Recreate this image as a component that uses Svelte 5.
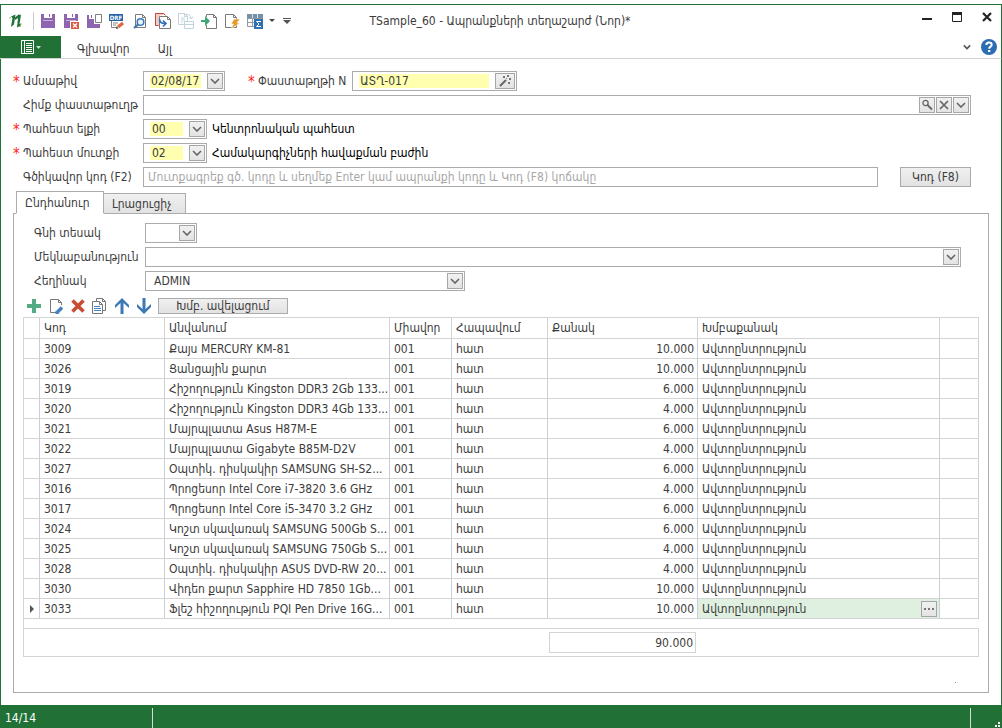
<script>
  const auto = 'Ավտոընտրություն';
  const rows = [
    ['3009', 'Քայս MERCURY KM-81', '10.000'],
    ['3026', 'Ցանցային քարտ', '10.000'],
    ['3019', 'Հիշողություն Kingston DDR3 2Gb 133...', '6.000'],
    ['3020', 'Հիշողություն Kingston DDR3 4Gb 133...', '4.000'],
    ['3021', 'Մայրպլատա Asus H87M-E', '6.000'],
    ['3022', 'Մայրպլատա Gigabyte B85M-D2V', '4.000'],
    ['3027', 'Օպտիկ. դիսկակիր SAMSUNG SH-S2...', '6.000'],
    ['3016', 'Պրոցեսոր Intel Core i7-3820 3.6 GHz', '4.000'],
    ['3017', 'Պրոցեսոր Intel Core i5-3470 3.2 GHz', '6.000'],
    ['3024', 'Կոշտ սկավառակ SAMSUNG 500Gb S...', '6.000'],
    ['3025', 'Կոշտ սկավառակ SAMSUNG 750Gb S...', '4.000'],
    ['3028', 'Օպտիկ. դիսկակիր ASUS DVD-RW 20...', '4.000'],
    ['3030', 'Վիդեո քարտ Sapphire HD 7850 1Gb...', '10.000'],
    ['3033', 'Ֆլեշ հիշողություն PQI Pen Drive 16G...', '10.000']
  ];
  let current = $state(13);
  let tab = $state(0);
</script>

{#snippet chevron()}
  <svg class="chev" viewBox="0 0 10 6" width="10" height="6" aria-hidden="true"><path d="M1 1l4 4 4-4" fill="none" stroke="#666" stroke-width="1.6" /></svg>
{/snippet}

{#snippet page(x, y, w, h)}
  <path d="M{x + 0.5} {y + 0.5}h{w - 4}l3 3v{h - 4}h-{w - 1}z" fill="#fff" stroke="#7a7a7a" />
  <path d="M{x + w - 3.5} {y + 0.5}v3h3" fill="none" stroke="#7a7a7a" />
{/snippet}

{#snippet disk()}
  <path fill="#9065b0" d="M1 1h14v14H1z" />
  <path fill="#fff" d="M4 1h8v4H4z" />
  <path fill="#9065b0" d="M9 1h1v3H9z" />
  <path fill="#c9b2d8" d="M3 7h10v1H3z" />
{/snippet}

<div class="window">
  <header class="titlebar">
    <div class="quick">
      <svg class="logo" viewBox="0 0 16 16" width="16" height="16" aria-hidden="true">
        <path d="M3 3.500l4.500-2L6 11.500 3 14l1.500-9z" fill="#21713a" />
        <path d="M7 4.500L10.500 1.500l2.500.500-1.500 9 2-.500-1 2.500-3.500 1.500L10 5 7 7z" fill="#21713a" />
        <path d="M3 4.500l-1.500.500M13 10.500l-1 3.500" stroke="#8fb53a" />
      </svg>
      <span class="sep"></span>
      <button class="icon" aria-label="Պահպանել"><svg viewBox="0 0 16 16">{@render disk()}</svg></button>
      <button class="icon" aria-label="Պահպանել և փակել"><svg viewBox="0 0 16 16">{@render disk()}<path fill="#fff" d="M7 8h9v8H7z" /><path fill="#dc5a41" d="M8 9h8v7H8z" /><path d="M10 10.500l4 4M14 10.500l-4 4" stroke="#fff" stroke-width="1.300" /></svg></button>
      <button class="icon" aria-label="Պահպանել և նոր"><svg viewBox="0 0 16 16"><path fill="#9065b0" d="M1 2h13v13H1z" /><path fill="#fff" d="M3 2h5v4H3zM8 0h8v11H8z" /><path fill="#9065b0" d="M5 2h1v3H5z" /><path fill="#fff" stroke="#808080" d="M9.500 1.500h6v8h-6z" /></svg></button>
      <button class="icon" aria-label="DRF">
        <svg viewBox="0 0 16 16"><path d="M2.500 8v6.500H8M12.500 3v5" fill="none" stroke="#858585" /><path fill="#2665a5" d="M0 1h14v7H0z" /><text x="7" y="7" text-anchor="middle" font-size="6" font-weight="700" fill="#fff">DRF</text><path d="M4 10h5M4 12h3" stroke="#858585" /><path d="M9 14l5-4" stroke="#e1683f" stroke-width="3.500" /><path d="M7 16l.500-3 2 2.500z" fill="#555" /></svg>
      </button>
      <button class="icon" aria-label="Դիտել"><svg viewBox="0 0 16 16">{@render page(3, 1, 11, 14)}<circle cx="8.500" cy="9" r="3.300" fill="#e8f1f8" stroke="#3b78b5" stroke-width="1.500" /><path d="M6 11.500l-4 3.500" stroke="#3b78b5" stroke-width="2.200" /></svg></button>
      <button class="icon" aria-label="Պատճենել"><svg viewBox="0 0 16 16"><path d="M0 0h9l2 2H5v11H0z" fill="#f3cbc6" /><path d="M.5 12.500V.500h8l2 2M.5 12.500h3" fill="none" stroke="#c4473a" />{@render page(4, 3, 12, 13)}<path d="M4.500 6q0 4.500 5.500 4.500M8 7.500l3 3-3 3" fill="none" stroke="#2e6fb5" stroke-width="1.600" /></svg></button>
      <button class="icon" aria-label="Տեղափոխել" disabled><svg viewBox="0 0 16 16" opacity=".35"><path d="M.5.500h6l3 3v8h-9z" fill="#fff" stroke="#4d87a8" /><path d="M6.500.500v3h3M3 5h4M3 7h4M3 9h2M8 1.500q5-.500 5 4M11 4l2 2 2-2" fill="none" stroke="#4d87a8" /><path d="M6.500 8.500h9v7h-9zM6.500 11.500h9" fill="#fff" stroke="#4d87a8" /></svg></button>
      <button class="icon" aria-label="Ներմուծել"><svg viewBox="0 0 16 16">{@render page(5, 1, 11, 15)}<path d="M0 6h3V2l7 6-7 6v-4H0z" fill="#fff" /><path d="M0 7h4V3l5 5-5 5V9H0z" fill="#3fa577" /></svg></button>
      <button class="icon" aria-label="Կատարել"><svg viewBox="0 0 16 16">{@render page(1, 1, 12, 14)}<path d="M10 6h6l-3 4h3l-9 6 2.500-5H7z" fill="#e69b27" stroke="#fff" stroke-width=".6" /></svg></button>
      <button class="icon" aria-label="Գումար"><svg viewBox="0 0 16 16"><path d="M.5 1.500h15v12H.5zM.5 5.500h15M.5 9.500h15M5.500 1v13M10.500 1v13" fill="#fff" stroke="#8f989f" /><path d="M0 1h16v4H0z" fill="#7392a8" /><path d="M5 1h1v4H5zM10 1h1v4h-1z" fill="#dbe3e8" /><path d="M7 6h9v10H7z" fill="#2d70b3" /><path d="M14 8.500H9.500l2.500 2.500-2.500 2.500H14" fill="none" stroke="#fff" /></svg></button>
      <svg class="drop" viewBox="0 0 6 4" width="6" height="4" aria-hidden="true"><path d="M0 0h6L3 3z" fill="#444" /></svg>
      <svg class="drop more" viewBox="0 0 8 6" width="8" height="6" aria-hidden="true"><path d="M0 0h8v1H0zM0 2h8L4 6z" fill="#555" /></svg>
    </div>
    <h1>TSample_60 - Ապրանքների տեղաշարժ (Նոր)*</h1>
    <div class="winbtns">
      <button aria-label="Ծալել"><svg viewBox="0 0 10 10"><path d="M0 6h10v2H0z" fill="#222" /></svg></button>
      <button aria-label="Ծավալել"><svg viewBox="0 0 10 10"><path d="M.5 1h9v8.500h-9z" fill="none" stroke="#222" /><path d="M0 0h10v3H0z" fill="#222" /></svg></button>
      <button aria-label="Փակել"><svg viewBox="0 0 10 10"><path d="M1 1l8 8M9 1L1 9" stroke="#222" stroke-width="2.200" /></svg></button>
    </div>
  </header>

  <nav class="ribbon">
    <button class="filebtn" aria-label="Ֆայլ">
      <svg viewBox="0 0 20 14" width="20" height="14" aria-hidden="true"><path d="M.5.500h12v13H.5zM3.500.500v13" fill="#217137" stroke="#fff" /><path d="M5 3.500h6M5 5.500h6M5 7.500h6M5 9.500h6M5 11.500h6" stroke="#fff" /><path d="M15 6h5l-2.500 3z" fill="#c5dccb" /></svg>
    </button>
    <a href="#main">Գլխավոր</a>
    <a href="#other">Այլ</a>
    <button class="collapse" aria-label="Ծալել ժապավենը"><svg viewBox="0 0 10 6" width="8" height="6"><path d="M1 1l4 4 4-4" fill="none" stroke="#555" stroke-width="2" /></svg></button>
    <button class="help" aria-label="Օգնություն"><svg viewBox="0 0 16 16" width="16" height="16"><circle cx="8" cy="8" r="8" fill="#2b6cb3" /><path d="M5.300 6q0-2.500 2.700-2.500t2.700 2.200c0 2-2.500 1.800-2.500 4" fill="none" stroke="#fff" stroke-width="2" /><path d="M7 11h2.300v2H7z" fill="#fff" /></svg></button>
  </nav>

  <main>
    <div class="form">
      <div class="row">
        <label class="req" for="date">Ամսաթիվ</label>
        <div class="box date">
          <input id="date" class="yellow" value="02/08/17" />
          <button class="mini" aria-label="Բացել օրացույցը">{@render chevron()}</button>
        </div>
        <label class="req doclabel" for="docn">Փաստաթղթի N</label>
        <div class="box docn">
          <input id="docn" class="yellow" value="ԱՏՂ-017" />
          <button class="mini wide" aria-label="Գեներացնել"><svg viewBox="0 0 12 12" width="12" height="12"><path d="M1 11l6-6" stroke="#666" stroke-width="2" /><path d="M4 1h2v2H4zM8 0h2v2H8zM10 3h2v2h-2zM9 7h2v2H9zM7 3h1v1H7z" fill="#777" /></svg></button>
        </div>
      </div>
      <div class="row">
        <label for="base">Հիմք փաստաթուղթ</label>
        <div class="box grow">
          <input id="base" />
          <button class="mini" aria-label="Փնտրել"><svg viewBox="0 0 12 12" width="12" height="12"><circle cx="4.500" cy="4" r="2.600" fill="none" stroke="#666" stroke-width="1.300" /><path d="M6.500 6l4.500 4.500" stroke="#666" stroke-width="1.800" /></svg></button>
          <button class="mini" aria-label="Մաքրել"><svg viewBox="0 0 10 10" width="10" height="10"><path d="M1 1l8 8M9 1L1 9" stroke="#666" stroke-width="1.700" /></svg></button>
          <button class="mini" aria-label="Բացել">{@render chevron()}</button>
        </div>
      </div>
      <div class="row">
        <label class="req" for="from">Պահեստ ելքի</label>
        <div class="box combo store"><select id="from" class="mark"><option>00</option></select><span class="mini">{@render chevron()}</span></div>
        <output for="from">Կենտրոնական պահեստ</output>
      </div>
      <div class="row">
        <label class="req" for="to">Պահեստ մուտքի</label>
        <div class="box combo store"><select id="to" class="mark"><option>02</option></select><span class="mini">{@render chevron()}</span></div>
        <output for="to">Համակարգիչների հավաքման բաժին</output>
      </div>
      <div class="row">
        <label for="bar">Գծիկավոր կոդ (F2)</label>
        <div class="box grow"><input id="bar" class="bar" placeholder="Մուտքագրեք գծ. կոդը և սեղմեք Enter կամ ապրանքի կոդը և Կոդ (F8) կոճակը" /></div>
        <button class="btn code">Կոդ (F8)</button>
      </div>
    </div>

    <div class="tabs" role="tablist">
      <button role="tab" aria-selected={tab === 0} class:on={tab === 0} onclick={() => (tab = 0)}>Ընդհանուր</button>
      <button role="tab" aria-selected={tab === 1} class:on={tab === 1} onclick={() => (tab = 1)}>Լրացուցիչ</button>
    </div>

    <section class="panel">
      <div class="form inner">
        <div class="row">
          <label for="price">Գնի տեսակ</label>
          <div class="box combo price"><select id="price"><option></option></select><span class="mini">{@render chevron()}</span></div>
        </div>
        <div class="row">
          <label for="note">Մեկնաբանություն</label>
          <div class="box combo grow"><select id="note"><option></option></select><span class="mini">{@render chevron()}</span></div>
        </div>
        <div class="row">
          <label for="author">Հեղինակ</label>
          <div class="box combo author"><select id="author"><option>ADMIN</option></select><span class="mini">{@render chevron()}</span></div>
        </div>
      </div>

      <div class="tools">
        <button class="icon" aria-label="Ավելացնել"><svg viewBox="0 0 16 16"><path d="M6 1h4v5h5v4h-5v5H6v-5H1V6h5z" fill="#53ab85" /></svg></button>
        <button class="icon" aria-label="Խմբագրել"><svg viewBox="0 0 16 16"><path d="M8 14.500H2.500V1.500h8l3 3V7" fill="#fff" stroke="#777" /><path d="M10.500 1.500v3h3" fill="none" stroke="#777" /><path d="M9 14.500l5-5" stroke="#4482bd" stroke-width="3.500" /><path d="M7.500 12.500L11 16H7.500z" fill="#4482bd" /></svg></button>
        <button class="icon" aria-label="Ջնջել"><svg viewBox="0 0 16 16"><path d="M2.500 2.500l11 11M13.500 2.500l-11 11" stroke="#c94c32" stroke-width="3.600" /></svg></button>
        <button class="icon" aria-label="Կրկնօրինակել"><svg viewBox="0 0 16 16"><path d="M4.500.500h6l3 3v9h-9z" fill="#fff" stroke="#777" /><path d="M10.500.500v3h3" fill="none" stroke="#777" /><path d="M.5 3.500h7l3 3v9H.5z" fill="#fff" stroke="#777" /><path d="M7.500 3.500v3h3" fill="none" stroke="#777" /><path d="M2 8.500h6M2 10.500h7M2 12.500h7" stroke="#4482bd" /></svg></button>
        <button class="icon" aria-label="Վերև"><svg viewBox="0 0 16 16"><path d="M8 0l7 7v3L9.500 5v11h-3V5L1 10V7z" fill="#3b78b5" /></svg></button>
        <button class="icon" aria-label="Ներքև"><svg viewBox="0 0 16 16"><path d="M8 16l7-7V6l-5.500 5V0h-3v11L1 6v3z" fill="#3b78b5" /></svg></button>
        <button class="btn group">Խմբ. ավելացում</button>
      </div>

      <div class="grid">
        <table>
          <colgroup><col class="c0" /><col class="c1" /><col class="c2" /><col class="c3" /><col class="c4" /><col class="c5" /><col class="c6" /><col /></colgroup>
          <thead>
            <tr><th></th><th>Կոդ</th><th>Անվանում</th><th>Միավոր</th><th>Հապավում</th><th>Քանակ</th><th>Խմբաքանակ</th><th></th></tr>
          </thead>
          <tbody>
            {#each rows as [code, name, qty], i}
              <tr onclick={() => (current = i)}>
                <td class="mark-cell">{#if i === current}<svg viewBox="0 0 4 8" width="4" height="8"><path d="M0 0l4 4-4 4z" fill="#555" /></svg>{/if}</td>
                <td>{code}</td>
                <td>{name}</td>
                <td>001</td>
                <td>հատ</td>
                <td class="num">{qty}</td>
                <td class:active={i === current}>
                  <div class="batch">{auto}{#if i === current}<button class="mini" aria-label="Ընտրել"><svg viewBox="0 0 10 2" width="10" height="2"><path d="M0 0h2v2H0zM4 0h2v2H4zM8 0h2v2H8z" fill="#777" /></svg></button>{/if}</div>
                </td>
                <td></td>
              </tr>
            {/each}
          </tbody>
        </table>
        <div class="total"><output>90.000</output></div>
      </div>
      <div class="dot"></div>
    </section>
  </main>

  <footer>
    <span class="count">14/14</span>
    <svg class="grip" viewBox="0 0 5 5" width="5" height="5" aria-hidden="true"><path d="M3 0h2v2H3zM0 3h2v2H0zM3 3h2v2H3z" fill="#fff" /></svg>
  </footer>
</div>

<style>
  :global(body) { margin: 0; background: #fff; }
  .window, .window * { box-sizing: border-box; }
  .window {
    min-height: 100vh;
    display: flex;
    flex-direction: column;
    padding-top: 4px;
    font: 12px/16px "DejaVu Sans Condensed", "DejaVu Sans", sans-serif;
    color: #3c3c3c;
  }
  button, input, select { font: inherit; color: inherit; margin: 0; padding: 0; border: 0; background: none; border-radius: 0; }
  .titlebar {
    display: grid;
    grid-template-columns: 1fr auto 1fr;
    align-items: center;
    height: 32px;
    padding: 0 9px 0 7px;
    border: 1px solid #217137;
    border-bottom: 0;
  }
  .quick { display: flex; align-items: center; gap: 7px; }
  .sep { width: 1px; height: 18px; background: #c8c8c8; margin: 0 -1px 0 2px; }
  .icon { width: 16px; height: 16px; display: block; flex: none; }
  .icon svg { display: block; width: 16px; height: 16px; }
  .drop { margin-left: -1px; }
  .more { margin-left: 1px; }
  h1 { margin: 0; font: inherit; }
  .winbtns { display: flex; justify-content: flex-end; gap: 20px; padding-bottom: 8px; }
  .winbtns button, .winbtns svg { width: 10px; height: 10px; display: block; }
  .ribbon {
    display: flex;
    align-items: center;
    height: 23px;
    padding-right: 4px;
    border-bottom: 1px solid #d2d2d2;
    border-right: 1px solid #217137;
  }
  .filebtn { width: 61px; align-self: stretch; background: #217137; display: grid; place-items: center; }
  .ribbon a { margin-left: 16px; color: inherit; text-decoration: none; padding-top: 3px; }
  .ribbon a + a { margin-left: 28px; }
  .collapse { margin-left: auto; margin-right: 10px; display: grid; }
  .help { display: grid; }
  main {
    flex: 1;
    display: flex;
    flex-direction: column;
    padding: 12px 12px 12px 12px;
    border: solid #217137;
    border-width: 0 1px;
  }
  .form { display: flex; flex-direction: column; gap: 4px; padding-right: 18px; }
  .row { display: flex; align-items: center; height: 20px; }
  .row > label { flex: none; width: 130px; padding-left: 10px; white-space: nowrap; }
  .row > label.req { padding-left: 0; }
  .req::before { content: "*"; color: #f22; display: inline-block; width: 10px; font-size: 15px; line-height: 12px; vertical-align: -2px; }
  .row > .doclabel { width: auto; margin: 0 6px 0 23px; }
  .box { display: flex; align-items: center; gap: 1px; height: 20px; border: 1px solid #ababab; background: #fff; padding: 0 1px 0 2px; }
  .grow { flex: 1; min-width: 0; }
  .box input { flex: 1; min-width: 0; height: 14px; outline: none; }
  .box input.yellow { background: #ffffaf; margin: 0 5px 0 4px; padding-left: 1px; }
  .date { width: 82px; }
  .docn { width: 165px; }
  .store { width: 64px; }
  .price { width: 52px; }
  .author { width: 320px; }
  .bar { padding-left: 2px; }
  .bar::placeholder { color: #a8a8a8; opacity: 1; }
  .mini {
    flex: none;
    width: 16px;
    height: 16px;
    display: grid;
    place-items: center;
    border: 1px solid #a6a6a6;
    background: linear-gradient(#f1f1f1, #e3e3e3);
    pointer-events: none;
  }
  button.mini { pointer-events: auto; }
  .wide { width: 20px; }
  .chev { display: block; }
  .combo { display: grid; grid-template-columns: 1fr 16px; }
  .combo select { grid-area: 1 / 1 / 2 / 3; width: 100%; height: 18px; appearance: none; padding-left: 6px; outline: none; }
  .combo .mini { grid-area: 1 / 2 / 2 / 3; }
  .combo select.mark { background: linear-gradient(#ffffaf, #ffffaf) 4px 2px / 33px 14px no-repeat; }
  .row > output { margin-left: 5px; color: #000; white-space: nowrap; }
  .btn { border: 1px solid #ababab; background: linear-gradient(#f0f0f0, #e2e2e2); }
  .code { width: 71px; height: 20px; margin-left: 22px; }
  .tabs { display: flex; align-items: flex-end; margin: 4px 0 -1px 3px; }
  .tabs button { width: 82px; height: 21px; padding-left: 8px; text-align: left; border: 1px solid #ababab; border-left: 0; background: linear-gradient(#f0f0f0, #e2e2e2); }
  .tabs .on { width: 88px; height: 23px; border-left: 1px solid #ababab; border-bottom-color: #fff; background: #fff; z-index: 1; }
  .panel { flex: 1; border: 1px solid #ababab; padding: 9px 9px 8px; }
  .inner { padding: 0 18px 0 0; }
  .inner .row > label { width: 122px; padding-left: 11px; }
  .tools { display: flex; align-items: center; gap: 6px; height: 26px; padding: 3px 0 0 3px; }
  .group { width: 130px; height: 16px; line-height: 14px; }
  .grid { border: 1px solid #d4d4d4; border-right: 0; }
  table { width: 100%; table-layout: fixed; border-spacing: 0; }
  .c0 { width: 16px; }
  .c1 { width: 125px; }
  .c2 { width: 225px; }
  .c3 { width: 62px; }
  .c4 { width: 96px; }
  .c5 { width: 150px; }
  .c6 { width: 242px; }
  th, td {
    height: 20px;
    padding: 0 3px 0 4px;
    border-right: 1px solid #c9ced8;
    border-bottom: 1px solid #d4d4d4;
    text-align: left;
    font-weight: 400;
    white-space: nowrap;
    overflow: hidden;
  }
  th { height: 21px; border-right-color: #d4d4d4; }
  td.num { text-align: right; }
  .mark-cell { padding: 0 0 0 6px; }
  .mark-cell svg { display: block; }
  .active { background: #dff0e0; }
  .batch { display: flex; align-items: center; justify-content: space-between; height: 19px; }
  .batch .mini { margin-right: -1px; }
  .total { margin-top: 9px; height: 28px; border: 1px solid #d4d4d4; border-width: 1px 1px 0 0; padding: 3px 0 0 525px; }
  .total output { display: block; width: 147px; height: 21px; border: 1px solid #d4d4d4; padding: 2px 2px 0; text-align: right; }
  .dot { width: 1px; height: 1px; background: #888; margin: 25px 23px 0 auto; }
  footer { display: flex; justify-content: space-between; align-items: flex-end; height: 23px; padding: 3px 0 0; background: #217137; color: #fff; }
  .count { width: 153px; align-self: stretch; padding: 2px 0 0 5px; border-right: 1px solid #cfe0d3; }
  .grip { width: 32px; height: 20px; padding: 14px 2px 1px 24px; border-left: 1px solid #cfe0d3; }
</style>
